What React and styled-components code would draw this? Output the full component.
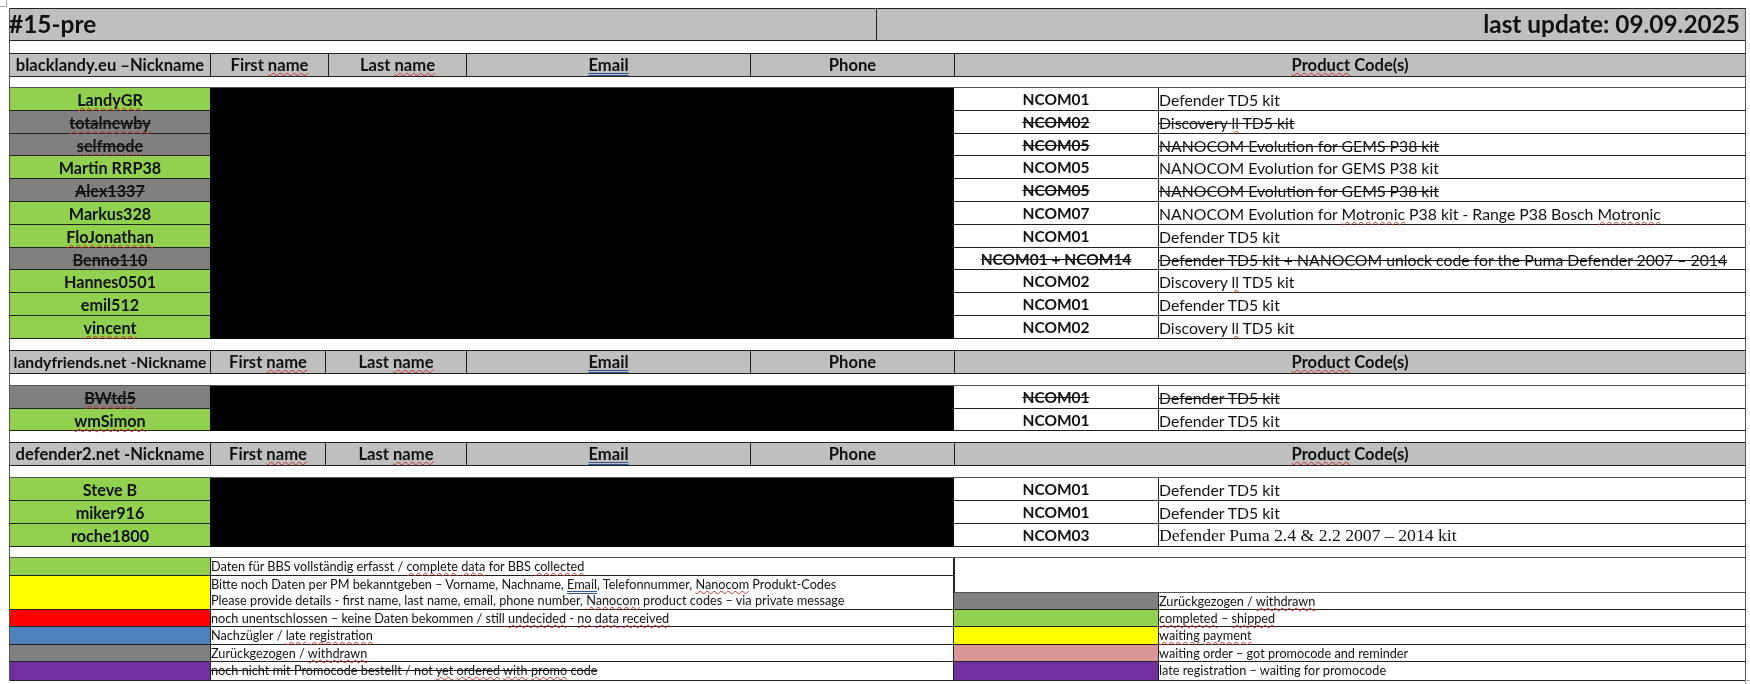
import React from 'react';
import styled, { createGlobalStyle } from 'styled-components';

const GlobalStyle = createGlobalStyle`
  html, body {
    margin: 0;
    background: #ffffff;
  }
  body {
    font-family: Lato, "Open Sans", sans-serif;
    color: #111111;
  }
`;

const GREEN = '#92d050';
const GRAY = '#808080';
const LINE = '#222222';

const Page = styled.div`
  position: relative;
  width: 1750px;
  height: 684px;
  box-sizing: border-box;
  padding: 8px 4px 0 9px;
  overflow: hidden;
`;

const Handle = styled.div`
  position: absolute;
  width: 7px;
  height: 7px;
  border: 1px solid #a8a8a8;
  background: #ffffff;
  ${(p) => (p.$end ? 'right: -4px; bottom: -5px;' : 'left: -2px; top: -2px;')}
`;

const Sheet = styled.div`
  border-left: 1px solid #555555;
  border-right: 1px solid #555555;
  filter: blur(0.35px);
`;

const TitleBar = styled.div`
  display: grid;
  grid-template-columns: 866px 1fr;
  height: 33px;
  box-sizing: border-box;
  background: #bfbfbf;
  border-top: 1px solid ${LINE};
  border-bottom: 1px solid ${LINE};
  font-size: 24.4px;
  font-weight: 700;
  line-height: 30px;
`;

const TitleCell = styled.div`
  padding-right: ${(p) => (p.$right ? '5px' : '0')};
  text-indent: ${(p) => (p.$right ? '0' : '-1px')};
  text-align: ${(p) => (p.$right ? 'right' : 'left')};
  white-space: nowrap;
  ${(p) => p.$right && `border-left: 1px solid ${LINE};`}
`;

const Spacer = styled.div`
  height: ${(p) => p.$h}px;
`;

const HeaderRow = styled.div`
  display: grid;
  grid-template-columns: 200px ${(p) => p.$first}px ${(p) => 256 - p.$first}px 284px 204px 1fr;
  height: 24px;
  box-sizing: border-box;
  background: #bfbfbf;
  border-top: 1px solid ${LINE};
  border-bottom: 1px solid ${LINE};
  font-size: 16.6px;
  font-weight: 700;
  line-height: 22px;
`;

const HeaderCell = styled.div`
  text-align: center;
  white-space: nowrap;
  ${(p) => p.$size && `font-size: ${p.$size}px;`}
  & + & {
    border-left: 1px solid ${LINE};
  }
`;

const DataBlock = styled.div`
  display: grid;
  grid-template-columns: 200px 744px 204px 1fr;
  grid-auto-rows: ${(p) => p.$rowH}px;
  border-top: 1px solid #555555;
`;

const Nick = styled.div`
  grid-column: 1;
  background: ${(p) => p.$bg};
  border-bottom: 1px solid ${LINE};
  box-sizing: border-box;
  text-align: center;
  font-size: 16.2px;
  font-weight: 700;
  line-height: 23px;
  white-space: nowrap;
  ${(p) => p.$gone && 'text-decoration: line-through;'}
`;

const Redacted = styled.div`
  grid-column: 2;
  grid-row: 1 / span ${(p) => p.$span};
  background: #000000;
`;

const Code = styled.div`
  grid-column: 3;
  border-bottom: 1px solid ${LINE};
  box-sizing: border-box;
  text-align: center;
  font-size: 15.5px;
  font-weight: 700;
  line-height: 23px;
  white-space: nowrap;
  ${(p) => p.$gone && 'text-decoration: line-through;'}
`;

const Desc = styled.div`
  grid-column: 4;
  border-left: 1px solid ${LINE};
  border-bottom: 1px solid ${LINE};
  box-sizing: border-box;
  font-size: 15.8px;
  line-height: 23px;
  white-space: nowrap;
  ${(p) => p.$gone && 'text-decoration: line-through;'}
  ${(p) => p.$serif && 'font-family: "Liberation Serif", serif; font-size: 17.7px;'}
`;

const Spell = styled.span`
  text-decoration: underline wavy #c8322a 1px;
  text-decoration-skip-ink: none;
  text-underline-offset: 1px;
`;

const Grammar = styled.span`
  text-decoration: underline double #2f5597 1px;
  text-decoration-skip-ink: none;
  text-underline-offset: 2px;
`;

const Legend = styled.div`
  display: grid;
  grid-template-columns: 944px 1fr;
  border-top: 1px solid #555555;
  border-bottom: 1px solid ${LINE};
`;

const LegendColumn = styled.div`
  display: flex;
  flex-direction: column;
`;

const LegendRow = styled.div`
  display: grid;
  grid-template-columns: ${(p) => (p.$wide ? '200px' : '204px')} 1fr;
  height: ${(p) => p.$h}px;
  box-sizing: border-box;
  border-bottom: 1px solid ${LINE};
  &:last-child {
    border-bottom: none;
  }
`;

const Swatch = styled.div`
  background: ${(p) => p.$bg};
`;

const LegendText = styled.div`
  border-left: 1px solid ${LINE};
  border-right: ${(p) => (p.$edge ? `1px solid ${LINE}` : 'none')};
  font-size: 12.7px;
  line-height: 16px;
  white-space: nowrap;
  ${(p) => p.$cross && 'text-decoration: line-through;'}
`;

const LegendBlank = styled.div`
  height: 35px;
  box-sizing: border-box;
  border-left: 1px solid ${LINE};
  border-bottom: 1px solid #555555;
`;

const S = Spell;

const block1 = [
  { nick: <S>LandyGR</S>, code: 'NCOM01', desc: 'Defender TD5 kit' },
  { nick: <S>totalnewby</S>, code: 'NCOM02', desc: <>Discovery <S>ll</S> TD5 kit</>, gone: true },
  { nick: <S>selfmode</S>, code: 'NCOM05', desc: 'NANOCOM Evolution for GEMS P38 kit', gone: true },
  { nick: 'Martin RRP38', code: 'NCOM05', desc: 'NANOCOM Evolution for GEMS P38 kit' },
  { nick: 'Alex1337', code: 'NCOM05', desc: 'NANOCOM Evolution for GEMS P38 kit', gone: true },
  { nick: 'Markus328', code: 'NCOM07', desc: <>NANOCOM Evolution for <S>Motronic</S> P38 kit - Range P38 Bosch <S>Motronic</S></> },
  { nick: <S>FloJonathan</S>, code: 'NCOM01', desc: 'Defender TD5 kit' },
  { nick: 'Benno110', code: 'NCOM01 + NCOM14', desc: 'Defender TD5 kit + NANOCOM unlock code for the Puma Defender 2007 – 2014', gone: true },
  { nick: 'Hannes0501', code: 'NCOM02', desc: <>Discovery <S>ll</S> TD5 kit</> },
  { nick: 'emil512', code: 'NCOM01', desc: 'Defender TD5 kit' },
  { nick: <S>vincent</S>, code: 'NCOM02', desc: <>Discovery <S>ll</S> TD5 kit</> },
];

const block2 = [
  { nick: <S>BWtd5</S>, code: 'NCOM01', desc: 'Defender TD5 kit', gone: true },
  { nick: <S>wmSimon</S>, code: 'NCOM01', desc: 'Defender TD5 kit' },
];

const block3 = [
  { nick: 'Steve B', code: 'NCOM01', desc: 'Defender TD5 kit' },
  { nick: 'miker916', code: 'NCOM01', desc: 'Defender TD5 kit' },
  { nick: 'roche1800', code: 'NCOM03', desc: 'Defender Puma 2.4 & 2.2 2007 – 2014 kit', serif: true },
];

const Header = ({ label, first, labelSize }) => (
  <HeaderRow $first={first}>
    <HeaderCell $size={labelSize}>{label}</HeaderCell>
    <HeaderCell>First <S>name</S></HeaderCell>
    <HeaderCell>Last <S>name</S></HeaderCell>
    <HeaderCell><Grammar>Email</Grammar></HeaderCell>
    <HeaderCell>Phone</HeaderCell>
    <HeaderCell><S>Product</S> Code(s)</HeaderCell>
  </HeaderRow>
);

const Members = ({ rows }) => (
  <DataBlock $rowH={22.8}>
    <Redacted $span={rows.length} />
    {rows.map((r, i) => (
      <React.Fragment key={i}>
        <Nick $bg={r.gone ? GRAY : GREEN} $gone={r.gone} style={{ gridRow: i + 1 }}>{r.nick}</Nick>
        <Code $gone={r.gone} style={{ gridRow: i + 1 }}>{r.code}</Code>
        <Desc $gone={r.gone} $serif={r.serif} style={{ gridRow: i + 1 }}>{r.desc}</Desc>
      </React.Fragment>
    ))}
  </DataBlock>
);

const App = () => (
  <>
    <GlobalStyle />
    <Page>
      <Handle />
      <Sheet>
        <TitleBar>
          <TitleCell>#15-pre</TitleCell>
          <TitleCell $right>last update: 09.09.2025</TitleCell>
        </TitleBar>
        <Spacer $h={12} />
        <Header label="blacklandy.eu –Nickname" first={118} />
        <Spacer $h={10} />
        <Members rows={block1} />
        <Spacer $h={11} />
        <Header label="landyfriends.net -Nickname" first={115} labelSize={15.7} />
        <Spacer $h={11} />
        <Members rows={block2} />
        <Spacer $h={11} />
        <Header label="defender2.net -Nickname" first={115} />
        <Spacer $h={11} />
        <Members rows={block3} />
        <Spacer $h={10} />
        <Legend>
          <LegendColumn>
            <LegendRow $wide $h={18}>
              <Swatch $bg={GREEN} />
              <LegendText $edge>Daten für BBS vollständig erfasst / <S>complete</S> <S>data</S> for BBS <S>collected</S></LegendText>
            </LegendRow>
            <LegendRow $wide $h={34}>
              <Swatch $bg="#ffff00" />
              <LegendText $edge>
                Bitte noch Daten per PM bekanntgeben – Vorname, Nachname, <Grammar>Email</Grammar>, Telefonnummer, <S>Nanocom</S> Produkt-Codes
                <br />
                Please provide details - first name, last name, email, phone number, <S>Nanocom</S> product codes – via private message
              </LegendText>
            </LegendRow>
            <LegendRow $wide $h={17.5}>
              <Swatch $bg="#ff0000" />
              <LegendText $edge>noch unentschlossen – keine Daten bekommen / still <S>undecided</S> - <S>no</S> <S>data</S> <S>received</S></LegendText>
            </LegendRow>
            <LegendRow $wide $h={17.5}>
              <Swatch $bg="#4f81bd" />
              <LegendText $edge>Nachzügler / <S>late</S> <S>registration</S></LegendText>
            </LegendRow>
            <LegendRow $wide $h={17.5}>
              <Swatch $bg={GRAY} />
              <LegendText $edge>Zurückgezogen / <S>withdrawn</S></LegendText>
            </LegendRow>
            <LegendRow $wide $h={17.5}>
              <Swatch $bg="#7030a0" />
              <LegendText $edge $cross>noch nicht mit Promocode bestellt / not <S>yet</S> <S>ordered</S> <S>with</S> <S>promo</S> code</LegendText>
            </LegendRow>
          </LegendColumn>
          <LegendColumn>
            <LegendBlank />
            <LegendRow $h={17}>
              <Swatch $bg={GRAY} />
              <LegendText>Zurückgezogen / <S>withdrawn</S></LegendText>
            </LegendRow>
            <LegendRow $h={17.5}>
              <Swatch $bg={GREEN} />
              <LegendText><S>completed</S> – <S>shipped</S></LegendText>
            </LegendRow>
            <LegendRow $h={17.5}>
              <Swatch $bg="#ffff00" />
              <LegendText><S>waiting</S> <S>payment</S></LegendText>
            </LegendRow>
            <LegendRow $h={17.5}>
              <Swatch $bg="#d99694" />
              <LegendText>waiting order – got promocode and reminder</LegendText>
            </LegendRow>
            <LegendRow $h={17.5}>
              <Swatch $bg="#7030a0" />
              <LegendText>late registration – waiting for promocode</LegendText>
            </LegendRow>
          </LegendColumn>
        </Legend>
      </Sheet>
      <Handle $end />
    </Page>
  </>
);

export default App;
